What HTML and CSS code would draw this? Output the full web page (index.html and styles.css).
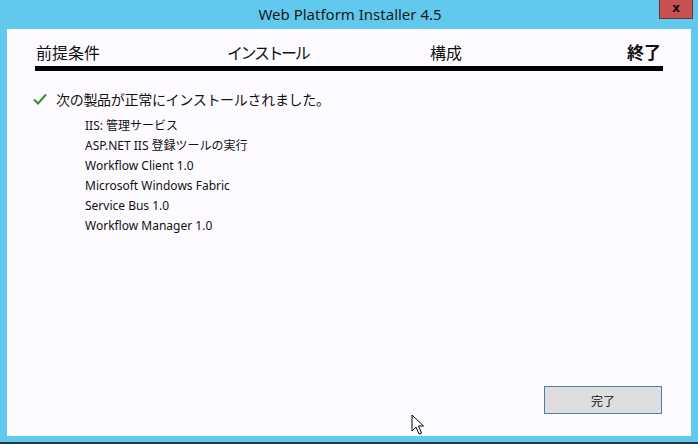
FILE: index.html
```html
<!DOCTYPE html>
<html lang="ja">
<head>
<meta charset="utf-8">
<link rel="stylesheet" href="styles.css">
</head>
<body>
<div class="window">
  <div class="titlebar">
    <div class="title">Web Platform Installer 4.5</div>
    <div class="close">x</div>
  </div>
  <div class="panel">
    <div class="steps">
      <span class="step s1">前提条件</span>
      <span class="step s2">インストール</span>
      <span class="step s3">構成</span>
      <span class="step current">終了</span>
    </div>
    <div class="bar"></div>
    <div class="result">
      <svg class="check" width="14" height="12" viewBox="0 0 14 12"><path d="M1 6.5 L5 10.5 L13 1.5" fill="none" stroke="#3a8c2c" stroke-width="2"/></svg>
      <span class="result-text">次の製品が正常にインストールされました。</span>
    </div>
    <ul class="products">
      <li>IIS: 管理サービス</li>
      <li>ASP.NET IIS 登録ツールの実行</li>
      <li>Workflow Client 1.0</li>
      <li>Microsoft Windows Fabric</li>
      <li>Service Bus 1.0</li>
      <li>Workflow Manager 1.0</li>
    </ul>
    <div class="footer">
      <button class="done">完了</button>
    </div>
    <svg class="cursor" width="14" height="22" viewBox="0 0 14 22"><path d="M1 1 L1 17 L5 13 L8 20 L10.5 19 L7.5 12 L12.5 12 Z" fill="#fff" stroke="#000" stroke-width="1"/></svg>
  </div>
  <div class="bottom"></div>
</div>
</body>
</html>
```
FILE: styles.css
```css
html, body {
  margin: 0;
  padding: 0;
}
body {
  width: 698px;
  height: 444px;
  overflow: hidden;
  background: #62c9ee;
  font-family: "Noto Sans", "Noto Sans CJK JP", sans-serif;
  color: #111;
}
.window {
  height: 444px;
  display: flex;
  flex-direction: column;
}
.titlebar {
  position: relative;
  height: 29px;
  flex: none;
}
.title {
  text-align: center;
  font-size: 15px;
  line-height: 29px;
  color: #1a1a1a;
  padding-left: 2px;
}
.close {
  position: absolute;
  top: 0;
  right: 5px;
  width: 32px;
  height: 18px;
  background: #c75050;
  border: 1px solid #6b3434;
  border-top: none;
  color: #111;
  font-family: "DejaVu Sans", sans-serif;
  font-weight: bold;
  font-size: 12px;
  line-height: 17px;
  text-align: center;
}
.panel {
  position: relative;
  margin: 0 7px;
  height: 407px;
  background: #fdfbff;
  padding: 0 28px;
  display: flex;
  flex-direction: column;
}
.steps {
  display: flex;
  width: 628px;
  margin-top: 11px;
  font-family: "Noto Sans CJK JP", sans-serif;
  font-size: 16px;
  line-height: 24px;
  height: 24px;
}
.s1 { width: 192px; padding-left: 1px; box-sizing: border-box; }
.s2 { width: 203px; letter-spacing: -2.4px; }
.s3 { flex: 1; }
.current { font-weight: bold; font-size: 17px; padding-right: 2px; }
.bar {
  width: 628px;
  height: 5px;
  background: #000;
  margin-top: 2px;
}
.result {
  display: flex;
  align-items: center;
  gap: 9px;
  margin-top: 17px;
  margin-left: -2px;
  font-size: 14px;
  line-height: 22px;
}
.result-text {
  font-family: "Noto Sans CJK JP", sans-serif;
  letter-spacing: -0.3px;
}
.products {
  list-style: none;
  margin: 6px 0 0 50px;
  padding: 0;
  font-size: 12px;
  line-height: 20px;
}
.footer {
  margin-top: auto;
  display: flex;
  justify-content: flex-end;
  padding-bottom: 22px;
}
.done {
  width: 118px;
  height: 28px;
  margin-right: 1px;
  background: #dedede;
  border: 1px solid #4f7ea8;
  font-family: "Noto Sans CJK JP", sans-serif;
  font-size: 12px;
  color: #111;
  padding: 0;
}
.cursor {
  position: absolute;
  left: 404px;
  top: 385px;
}
.bottom {
  margin-top: auto;
  height: 2px;
  background: #243844;
}
```
